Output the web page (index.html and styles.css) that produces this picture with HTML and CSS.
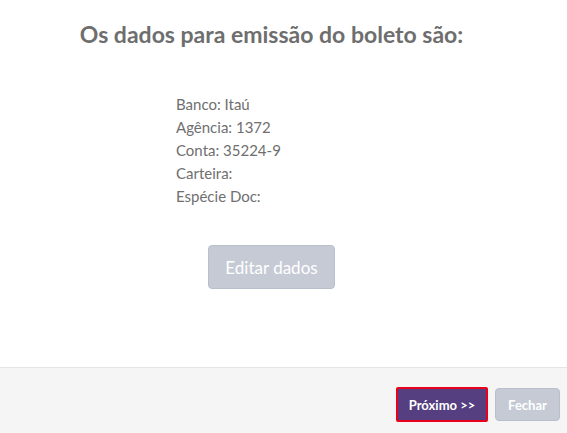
FILE: index.html
```html
<!DOCTYPE html>
<html lang="pt-BR">
<head>
    <meta charset="UTF-8">
    <meta name="viewport" content="width=device-width, initial-scale=1.0">
    <title>Dados do boleto</title>
    <link rel="stylesheet" href="styles.css">
</head>
<body>
    <div class="modal">
        <div class="modal-body">
            <h2 class="modal-title">Os dados para emissão do boleto são:</h2>

            <ul class="bank-data">
                <li>Banco: Itaú</li>
                <li>Agência: 1372</li>
                <li>Conta: 35224-9</li>
                <li>Carteira:</li>
                <li>Espécie Doc:</li>
            </ul>

            <div class="edit-row">
                <button class="btn btn-muted btn-edit">Editar dados</button>
            </div>
        </div>

        <div class="modal-footer">
            <button class="btn btn-primary">Próximo &gt;&gt;</button>
            <button class="btn btn-muted btn-close">Fechar</button>
        </div>
    </div>
</body>
</html>
```

FILE: styles.css
```css
* {
    box-sizing: border-box;
    margin: 0;
    padding: 0;
    font-family: Lato, 'Open Sans', sans-serif;
}

body {
    background-color: white;
}

.modal {
    width: 567px;
    height: 433px;
    display: flex;
    flex-direction: column;
}

.modal-body {
    flex: 1;
    padding: 18px 24px 0 0;
}

.modal-title {
    text-align: center;
    font-size: 23px;
    font-weight: 700;
    color: #6e6e6e;
    line-height: 32px;
}

.bank-data {
    list-style: none;
    margin-top: 43px;
    padding-left: 176px;
    font-size: 15px;
    line-height: 23px;
    color: #6f6f6f;
}

.edit-row {
    display: flex;
    justify-content: center;
    margin-top: 37px;
}

.btn {
    border: none;
    border-radius: 4px;
    color: white;
    cursor: pointer;
}

.btn-muted {
    background-color: #c5cad5;
    border: 1px solid #b9bfcc;
}

.btn-edit {
    width: 127px;
    height: 44px;
    font-size: 17px;
}

.modal-footer {
    height: 66px;
    border-top: 1px solid #e5e5e5;
    background-color: #f5f5f5;
    display: flex;
    justify-content: flex-end;
    align-items: flex-start;
    gap: 7px;
    padding: 19px 7px 0 0;
}

.btn-primary {
    width: 92px;
    height: 35px;
    background-color: #553f80;
    border: 2px solid #e8001c;
    border-radius: 2px;
    font-size: 13px;
    font-weight: 700;
}

.btn-close {
    width: 65px;
    height: 33px;
    margin-top: 1px;
    font-size: 13px;
    font-weight: 700;
}
```
